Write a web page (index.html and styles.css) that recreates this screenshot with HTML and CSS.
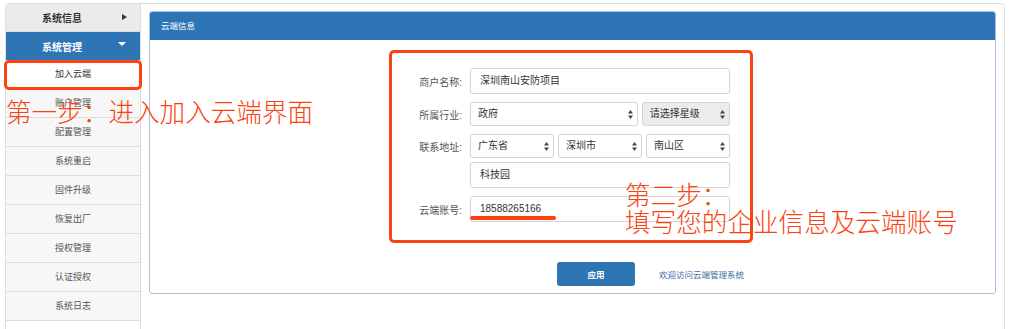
FILE: index.html
```html
<!DOCTYPE html>
<html lang="zh-CN">
<head>
    <meta charset="UTF-8">
    <meta name="viewport" content="width=device-width, initial-scale=1.0">
    <title>加入云端</title>
    <link rel="stylesheet" href="styles.css">
</head>
<body>
    <div class="frame">
        <aside class="sidebar">
            <div class="nav-head">
                <span>系统信息</span>
                <i class="tri-right"></i>
            </div>
            <div class="nav-head open">
                <span>系统管理</span>
                <i class="tri-down"></i>
            </div>
            <ul class="nav-list">
                <li class="current">加入云端</li>
                <li>账户管理</li>
                <li>配置管理</li>
                <li>系统重启</li>
                <li>固件升级</li>
                <li>恢复出厂</li>
                <li>授权管理</li>
                <li>认证授权</li>
                <li>系统日志</li>
                <li>&nbsp;</li>
            </ul>
        </aside>

        <main class="main">
            <section class="panel">
                <div class="panel-head">云端信息</div>
                <div class="panel-body">
                    <div class="cloud-form">
                        <div class="form-row">
                            <label>商户名称:</label>
                            <div class="field">深圳南山安防项目</div>
                        </div>
                        <div class="form-row">
                            <label>所属行业:</label>
                            <div class="selects">
                                <div class="select wide">政府<svg class="arrows" width="5" height="9" viewBox="0 0 5 9"><polygon points="0,3.6 2.5,0 5,3.6"/><polygon points="0,5.4 2.5,9 5,5.4"/></svg></div>
                                <div class="select muted">请选择星级<svg class="arrows" width="5" height="9" viewBox="0 0 5 9"><polygon points="0,3.6 2.5,0 5,3.6"/><polygon points="0,5.4 2.5,9 5,5.4"/></svg></div>
                            </div>
                        </div>
                        <div class="form-row">
                            <label>联系地址:</label>
                            <div class="selects">
                                <div class="select">广东省<svg class="arrows" width="5" height="9" viewBox="0 0 5 9"><polygon points="0,3.6 2.5,0 5,3.6"/><polygon points="0,5.4 2.5,9 5,5.4"/></svg></div>
                                <div class="select">深圳市<svg class="arrows" width="5" height="9" viewBox="0 0 5 9"><polygon points="0,3.6 2.5,0 5,3.6"/><polygon points="0,5.4 2.5,9 5,5.4"/></svg></div>
                                <div class="select">南山区<svg class="arrows" width="5" height="9" viewBox="0 0 5 9"><polygon points="0,3.6 2.5,0 5,3.6"/><polygon points="0,5.4 2.5,9 5,5.4"/></svg></div>
                            </div>
                        </div>
                        <div class="form-row tight">
                            <label></label>
                            <div class="field">科技园</div>
                        </div>
                        <div class="form-row">
                            <label>云端账号:</label>
                            <div class="field">18588265166</div>
                        </div>
                    </div>
                    <div class="actions">
                        <button type="button">应用</button>
                        <a href="#">欢迎访问云端管理系统</a>
                    </div>
                </div>
            </section>
        </main>
    </div>

    <!-- 标注 -->
    <div class="mark-box mark-nav"></div>
    <div class="mark-box mark-form"></div>
    <div class="mark-line"></div>
    <p class="note note-one">第一步：进入加入云端界面</p>
    <p class="note note-two">第二步：<br>填写您的企业信息及云端账号</p>
</body>
</html>
```

FILE: styles.css
```css
* {
    margin: 0;
    padding: 0;
    box-sizing: border-box;
}

html, body {
    width: 100%;
    height: 100%;
    background-color: #FFFFFF;
    font-family: "Liberation Sans", "Noto Sans CJK SC", sans-serif;
    overflow: hidden;
}

.frame {
    display: flex;
    margin: 3px 10px 0 5px;
    height: 326px;
    overflow: hidden;
    border: 1px solid #dddddd;
    border-bottom: none;
    border-radius: 5px 5px 0 0;
}

/* 左侧菜单 */
.sidebar {
    width: 135px;
    flex-shrink: 0;
    overflow: hidden;
    border-right: 1px solid #dddddd;
    background-color: #f7f7f7;
}

.nav-head {
    height: 28px;
    display: flex;
    align-items: center;
    justify-content: center;
    position: relative;
    padding-right: 22px;
    font-size: 10px;
    font-weight: bold;
    color: #333333;
    background-color: #ebebeb;
    border-bottom: 1px solid #dddddd;
}

.nav-head.open {
    background-color: #2e75b6;
    color: #FFFFFF;
    border-bottom: none;
}

.tri-right {
    position: absolute;
    right: 13px;
    top: 10px;
    width: 0;
    height: 0;
    border-top: 3.5px solid transparent;
    border-bottom: 3.5px solid transparent;
    border-left: 5px solid #333333;
}

.tri-down {
    position: absolute;
    right: 14px;
    top: 10px;
    width: 0;
    height: 0;
    border-left: 4px solid transparent;
    border-right: 4px solid transparent;
    border-top: 4px solid #FFFFFF;
}

.nav-list {
    list-style: none;
}

.nav-list li {
    height: 29px;
    line-height: 28px;
    text-align: center;
    font-size: 9px;
    color: #555555;
    border-bottom: 1px solid #dddddd;
}

.nav-list li.current {
    background-color: #FFFFFF;
    color: #333333;
}

.nav-list li:last-child {
    background-color: #FFFFFF;
}

/* 主内容 */
.main {
    flex: 1;
    padding: 7px 8px 0 8px;
}

.panel {
    border: 1px solid #a9c4e0;
    border-radius: 3px;
    height: 283px;
    overflow: hidden;
}

.panel-head {
    height: 28px;
    line-height: 28px;
    padding-left: 11px;
    font-size: 8.5px;
    color: #FFFFFF;
    background-color: #2e75b6;
}

.panel-body {
    padding-top: 28px;
}

.cloud-form {
    margin-left: 260px;
    width: 320px;
}

.form-row {
    display: grid;
    grid-template-columns: 52px 260px;
    column-gap: 8px;
    align-items: center;
    margin-bottom: 8px;
}

.form-row.tight {
    margin-top: -4px;
}

.form-row label {
    text-align: right;
    font-size: 10px;
    color: #555555;
}

.field {
    height: 26px;
    line-height: 24px;
    padding-left: 9px;
    font-size: 10px;
    color: #333333;
    border: 1px solid #d5d5d5;
    border-radius: 3px;
    background-color: #FFFFFF;
}

.selects {
    display: flex;
    gap: 4px;
}

.select {
    flex: 1;
    height: 24px;
    line-height: 22px;
    padding-left: 7px;
    position: relative;
    font-size: 10px;
    color: #333333;
    border: 1px solid #d5d5d5;
    border-radius: 3px;
    background-color: #FFFFFF;
}

.select.wide {
    flex: 2;
}

.select.muted {
    background-color: #ececec;
}

.arrows {
    position: absolute;
    right: 4px;
    top: 7px;
    fill: #444444;
}

.actions {
    display: flex;
    align-items: center;
    margin-top: 40px;
    padding-left: 407px;
}

.actions button {
    width: 78px;
    height: 24px;
    border: none;
    border-radius: 3px;
    background-color: #2e75b6;
    color: #FFFFFF;
    font-size: 8.5px;
    font-weight: bold;
    font-family: "Liberation Sans", "Noto Sans CJK SC", sans-serif;
}

.actions a {
    margin-left: 24px;
    font-size: 8.5px;
    color: #3a6ea5;
    text-decoration: none;
}

/* 标注 */
.mark-box {
    position: absolute;
    border: 3px solid #fb4210;
    border-radius: 5px;
}

.mark-nav {
    left: 4px;
    top: 60px;
    width: 138px;
    height: 30px;
}

.mark-form {
    left: 389px;
    top: 50px;
    width: 364px;
    height: 193px;
}

.mark-line {
    position: absolute;
    left: 470px;
    top: 216px;
    width: 86px;
    height: 4px;
    border-radius: 2px;
    background-color: #fb4210;
}

.note {
    position: absolute;
    font-family: "Noto Sans CJK SC", sans-serif;
    font-weight: 300;
    font-size: 25.6px;
    line-height: 27px;
    color: #fb4210;
    white-space: nowrap;
}

.note-one {
    left: 6px;
    top: 97px;
}

.note-two {
    left: 625px;
    top: 180px;
}
```
